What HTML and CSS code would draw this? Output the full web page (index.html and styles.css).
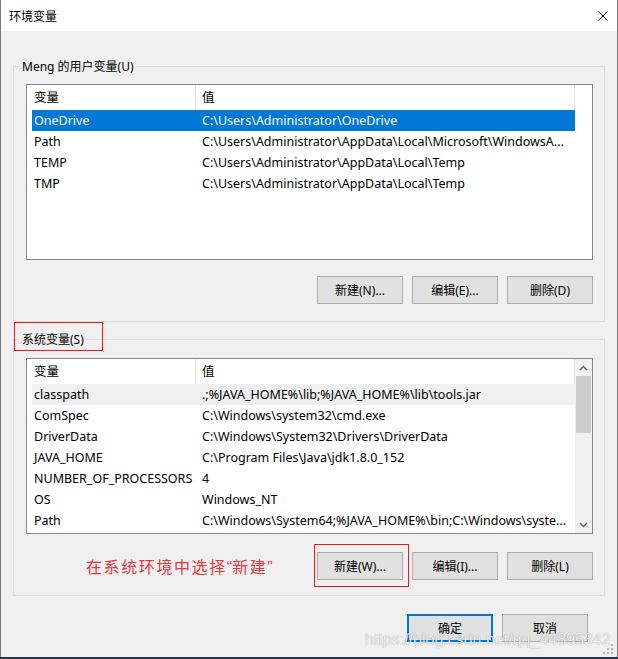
FILE: index.html
```html
<!DOCTYPE html>
<html lang="zh-CN">
<head>
    <meta charset="UTF-8">
    <title>环境变量</title>
    <link rel="stylesheet" href="styles.css">
</head>
<body>
    <div class="window">
        <div class="titlebar">
            <span class="title">环境变量</span>
            <svg class="close" width="10" height="10" viewBox="0 0 10 10"><path d="M0.5 0.5L9.5 9.5M9.5 0.5L0.5 9.5"/></svg>
        </div>

        <div class="content">
            <div class="group group-user">
                <div class="group-title">Meng 的用户变量(U)</div>
                <div class="list">
                    <div class="list-body list-body-full">
                        <div class="list-head"><span>变量</span><span>值</span></div>
                        <div class="row selected"><span>OneDrive</span><span>C:\Users\Administrator\OneDrive</span></div>
                        <div class="row"><span>Path</span><span>C:\Users\Administrator\AppData\Local\Microsoft\WindowsA...</span></div>
                        <div class="row"><span>TEMP</span><span>C:\Users\Administrator\AppData\Local\Temp</span></div>
                        <div class="row"><span>TMP</span><span>C:\Users\Administrator\AppData\Local\Temp</span></div>
                    </div>
                </div>
                <div class="btn-row">
                    <button class="btn">新建(N)...</button>
                    <button class="btn">编辑(E)...</button>
                    <button class="btn">删除(D)</button>
                </div>
            </div>

            <div class="group group-system">
                <div class="group-title marked-title">系统变量(S)</div>
                <div class="list">
                    <div class="list-body">
                        <div class="list-head"><span>变量</span><span>值</span></div>
                        <div class="row inactive"><span>classpath</span><span>.;%JAVA_HOME%\lib;%JAVA_HOME%\lib\tools.jar</span></div>
                        <div class="row"><span>ComSpec</span><span>C:\Windows\system32\cmd.exe</span></div>
                        <div class="row"><span>DriverData</span><span>C:\Windows\System32\Drivers\DriverData</span></div>
                        <div class="row"><span>JAVA_HOME</span><span>C:\Program Files\Java\jdk1.8.0_152</span></div>
                        <div class="row"><span>NUMBER_OF_PROCESSORS</span><span>4</span></div>
                        <div class="row"><span>OS</span><span>Windows_NT</span></div>
                        <div class="row"><span>Path</span><span>C:\Windows\System64;%JAVA_HOME%\bin;C:\Windows\syste...</span></div>
                    </div>
                    <div class="scrollbar">
                        <div class="arrow">
                            <svg width="9" height="6" viewBox="0 0 9 6"><path d="M1 5L4.5 1.5L8 5"/></svg>
                        </div>
                        <div class="thumb"></div>
                        <div class="track"></div>
                        <div class="arrow">
                            <svg width="9" height="6" viewBox="0 0 9 6"><path d="M1 1L4.5 4.5L8 1"/></svg>
                        </div>
                    </div>
                </div>
                <div class="btn-row">
                    <span class="note">在系统环境中选择<span class="quote">“</span>新建<span class="quote">”</span></span>
                    <button class="btn marked-btn">新建(W)...</button>
                    <button class="btn">编辑(I)...</button>
                    <button class="btn">删除(L)</button>
                </div>
            </div>
        </div>

        <div class="footer">
            <button class="btn btn-default">确定</button>
            <button class="btn">取消</button>
        </div>

        <div class="watermark">https://blog.csdn.net/qq_44895342</div>
        <svg class="grip" width="11" height="11" viewBox="0 0 11 11">
            <rect x="8" y="0" width="2" height="2"/>
            <rect x="4" y="4" width="2" height="2"/>
            <rect x="8" y="4" width="2" height="2"/>
            <rect x="0" y="8" width="2" height="2"/>
            <rect x="4" y="8" width="2" height="2"/>
            <rect x="8" y="8" width="2" height="2"/>
        </svg>
    </div>
</body>
</html>
```

FILE: styles.css
```css
* {
    margin: 0;
    padding: 0;
    box-sizing: border-box;
}

body {
    background-color: #2b3340;
    font-family: "Noto Sans", "Noto Sans CJK SC", sans-serif;
    font-size: 12px;
    color: #000;
}

.window {
    position: relative;
    width: 618px;
    height: 657px;
    background-color: #f0f0f0;
    border-left: 1px solid #7a7a7a;
    border-right: 1px solid #7a7a7a;
}

/* Title bar */
.titlebar {
    height: 31px;
    background-color: #fff;
    display: flex;
    align-items: center;
    justify-content: space-between;
    padding: 0 9px 0 8px;
}

.title {
    font-size: 12px;
}

.close path {
    stroke: #000;
    stroke-width: 1;
    fill: none;
}

/* Group boxes */
.content {
    padding: 35px 12px 0 12px;
}

.group {
    border: 1px solid #dcdcdc;
    padding: 0 11px 17px 12px;
}

.group-system {
    margin-top: 17px;
    padding-bottom: 15px;
}

.group-title {
    position: relative;
    display: block;
    width: fit-content;
    margin: -9px 0 0 -6px;
    padding: 0 2px;
    line-height: 17px;
    background-color: #f0f0f0;
}

.marked-title::after {
    content: "";
    position: absolute;
    left: -6px;
    top: -9px;
    width: 87px;
    height: 27px;
    border: 1px solid #ee1a1a;
}

/* List view */
.list {
    display: flex;
    height: 176px;
    margin-top: 9px;
    background-color: #fff;
    border: 1px solid #828790;
    font-size: 12.5px;
}

.group-system .list {
    margin-top: 10px;
}

.list-body {
    flex: 1;
    min-width: 0;
    padding-left: 5px;
}

.list-body-full {
    padding-right: 17px;
}

.list-head,
.row {
    display: grid;
    grid-template-columns: 164px 1fr;
    white-space: nowrap;
}

.list-head {
    height: 25px;
    line-height: 25px;
}

.list-head span {
    border-right: 1px solid #e5e5e5;
}

.row {
    height: 21px;
    line-height: 21px;
}

.list-head span,
.row span {
    overflow: hidden;
    padding-left: 2px;
}

.list-head span + span,
.row span + span {
    padding-left: 6px;
}

.row.selected {
    background-color: #0078d7;
    color: #fff;
}

.row.inactive {
    background-color: #f0f0f0;
}

/* Scrollbar */
.scrollbar {
    width: 17px;
    display: flex;
    flex-direction: column;
    background-color: #f0f0f0;
}

.arrow {
    height: 17px;
    display: flex;
    align-items: center;
    justify-content: center;
}

.arrow path {
    stroke: #606060;
    stroke-width: 1.4;
    fill: none;
}

.thumb {
    height: 57px;
    margin: 0 1px;
    background-color: #cdcdcd;
}

.track {
    flex: 1;
}

/* Buttons */
.btn-row {
    display: flex;
    justify-content: flex-end;
    align-items: center;
    gap: 9px;
    margin-top: 16px;
}

.group-system .btn-row {
    margin-top: 18px;
}

.btn {
    position: relative;
    width: 86px;
    height: 28px;
    background-color: #e1e1e1;
    border: 1px solid #adadad;
    font-family: inherit;
    font-size: 12px;
    color: #000;
}

.btn-default {
    border: 2px solid #0078d7;
}

.marked-btn::after {
    content: "";
    position: absolute;
    left: -4px;
    top: -9px;
    width: 93px;
    height: 41px;
    border: 1px solid #ee1a1a;
}

.note {
    margin: 0 auto 0 60px;
    font-family: "Noto Sans CJK SC", sans-serif;
    font-size: 16px;
    letter-spacing: 1.6px;
    color: #e8363c;
}

.note .quote {
    font-family: "Liberation Sans", sans-serif;
    letter-spacing: 0;
}

/* Footer */
.footer {
    display: flex;
    justify-content: flex-end;
    gap: 9px;
    margin-top: 18px;
    padding-right: 29px;
}

.watermark {
    position: absolute;
    left: 364px;
    top: 631px;
    font-family: "Liberation Sans", sans-serif;
    font-size: 16px;
    line-height: 18px;
    color: rgba(255, 255, 255, 0.85);
    text-shadow: 0 0 1px rgba(0, 0, 0, 0.45);
}

.grip {
    position: absolute;
    right: 3px;
    bottom: 2px;
}

.grip rect {
    fill: #b5b5b5;
}
```
